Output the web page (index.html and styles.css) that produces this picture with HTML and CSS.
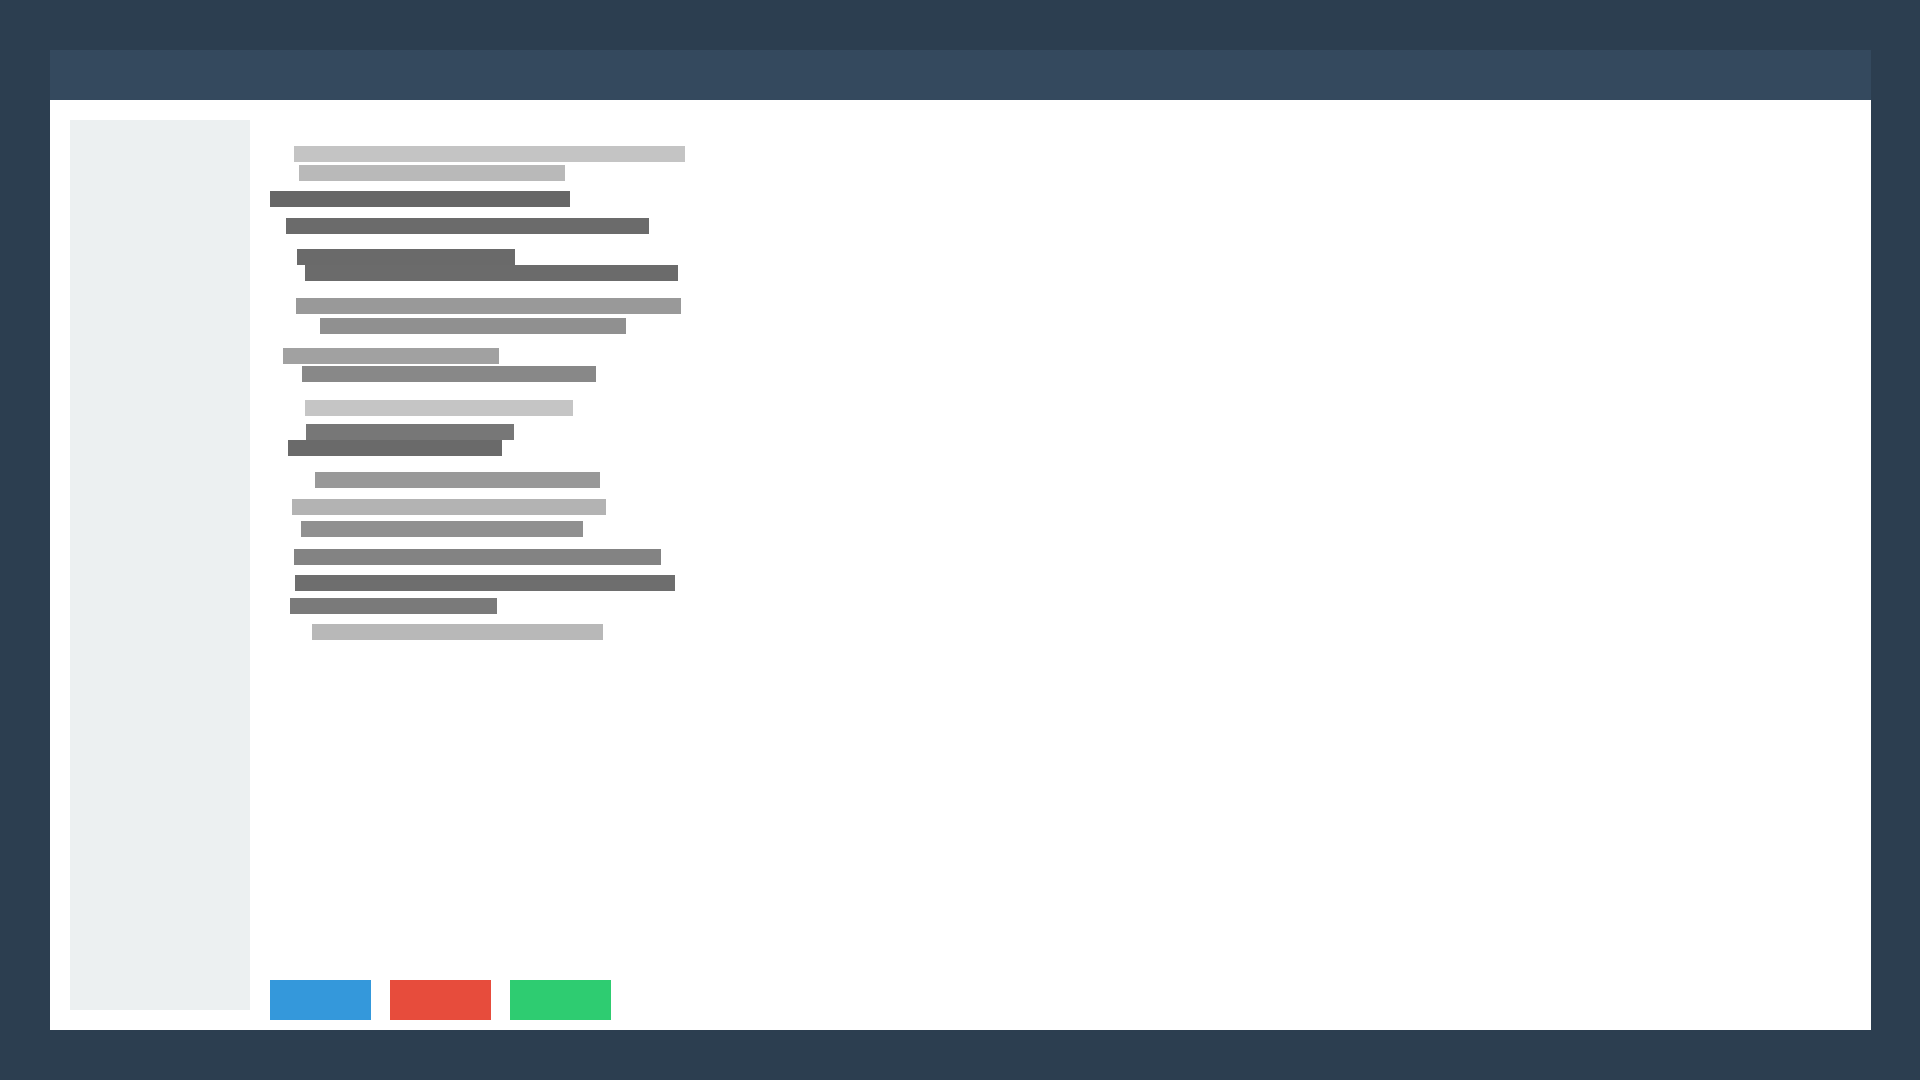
FILE: index.html
```html
<!DOCTYPE html>
<html lang="en">
<head>
<meta charset="utf-8">
<title>Window</title>
<link rel="stylesheet" href="styles.css">
</head>
<body>
<div class="window">
  <div class="titlebar"></div>
  <div class="body">
    <aside class="sidebar"></aside>
    <main class="main">
      <div class="lines">
        <div class="bar" style="margin-top:26px;margin-left:24px;width:391px;background:#c4c4c4"></div>
        <div class="bar" style="margin-top:3px;margin-left:29px;width:266px;background:#b9b9b9"></div>
        <div class="bar" style="margin-top:10px;margin-left:0px;width:300px;background:#666666"></div>
        <div class="bar" style="margin-top:11px;margin-left:16px;width:363px;background:#6b6b6b"></div>
        <div class="bar" style="margin-top:15px;margin-left:27px;width:218px;background:#6a6a6a"></div>
        <div class="bar" style="margin-top:0px;margin-left:35px;width:373px;background:#6b6b6b"></div>
        <div class="bar" style="margin-top:17px;margin-left:26px;width:385px;background:#999999"></div>
        <div class="bar" style="margin-top:4px;margin-left:50px;width:306px;background:#909090"></div>
        <div class="bar" style="margin-top:14px;margin-left:13px;width:216px;background:#a1a1a1"></div>
        <div class="bar" style="margin-top:2px;margin-left:32px;width:294px;background:#888888"></div>
        <div class="bar" style="margin-top:18px;margin-left:35px;width:268px;background:#c5c5c5"></div>
        <div class="bar" style="margin-top:8px;margin-left:36px;width:208px;background:#777777"></div>
        <div class="bar" style="margin-top:0px;margin-left:18px;width:214px;background:#6a6a6a"></div>
        <div class="bar" style="margin-top:16px;margin-left:45px;width:285px;background:#999999"></div>
        <div class="bar" style="margin-top:11px;margin-left:22px;width:314px;background:#b3b3b3"></div>
        <div class="bar" style="margin-top:6px;margin-left:31px;width:282px;background:#909090"></div>
        <div class="bar" style="margin-top:12px;margin-left:24px;width:367px;background:#838383"></div>
        <div class="bar" style="margin-top:10px;margin-left:25px;width:380px;background:#6e6e6e"></div>
        <div class="bar" style="margin-top:7px;margin-left:20px;width:207px;background:#7a7a7a"></div>
        <div class="bar" style="margin-top:10px;margin-left:42px;width:291px;background:#b8b8b8"></div>
      </div>
      <div class="buttons">
        <div class="btn btn-blue"></div>
        <div class="btn btn-red"></div>
        <div class="btn btn-green"></div>
      </div>
    </main>
  </div>
</div>
</body>
</html>
```

FILE: styles.css
```css
* { box-sizing: border-box; }
html, body { margin: 0; padding: 0; }
body {
  width: 1920px;
  height: 1080px;
  background: #2c3e50;
  padding: 50px;
  overflow: hidden;
  font-family: "Liberation Sans", Arial, sans-serif;
}
.window {
  width: 1821px;
  height: 980px;
  display: flex;
  flex-direction: column;
  background: #ffffff;
}
.titlebar {
  height: 50px;
  flex: 0 0 50px;
  background: #34495e;
}
.body {
  flex: 1;
  display: flex;
  gap: 20px;
  padding: 20px 20px 10px 20px;
}
.sidebar {
  width: 180px;
  flex: 0 0 180px;
  height: 890px;
  background: #ecf0f1;
}
.main {
  flex: 1;
  display: flex;
  flex-direction: column;
}
.lines {
  display: flex;
  flex-direction: column;
  align-items: flex-start;
}
.bar {
  height: 16px;
}
.buttons {
  margin-top: auto;
  display: flex;
  gap: 19px;
}
.btn {
  width: 101px;
  height: 40px;
}
.btn-blue { background: #3498db; }
.btn-red { background: #e74c3c; }
.btn-green { background: #2ecc71; }
```
